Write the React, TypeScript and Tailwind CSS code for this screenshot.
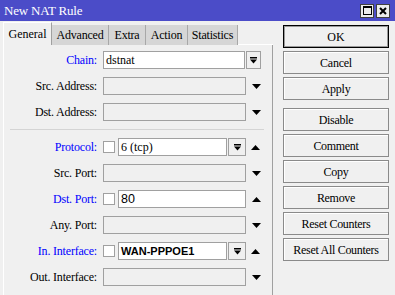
import React from "react";

function DownArrow() {
  return (
    <svg width="9" height="5" viewBox="0 0 9 5" className="block">
      <polygon points="0,0 9,0 4.5,5" fill="#000" />
    </svg>
  );
}

function UpArrow() {
  return (
    <svg width="9" height="5" viewBox="0 0 9 5" className="block">
      <polygon points="0,5 9,5 4.5,0" fill="#000" />
    </svg>
  );
}

function DropIcon() {
  return (
    <svg width="7" height="7" viewBox="0 0 7 7" className="block">
      <rect x="0" y="0" width="7" height="1.5" fill="#000" />
      <polygon points="0,2.5 7,2.5 3.5,6.5" fill="#000" />
    </svg>
  );
}

function Label({ text, blue }: { text: string; blue?: boolean }) {
  return (
    <div
      className={
        "w-[93px] text-right text-[12px] tracking-[-0.2px] leading-none font-['Liberation_Serif',serif] " +
        (blue ? "text-[#0000ff]" : "text-black")
      }
    >
      {text}
    </div>
  );
}

function Row({ children }: { children: React.ReactNode }) {
  return <div className="flex h-[26px] items-center">{children}</div>;
}

function Check() {
  return <div className="ml-[6px] h-[12px] w-[12px] border border-[#a0a0a0] bg-white" />;
}

function App() {
  const buttons1 = ["Cancel", "Apply"];
  const buttons2 = ["Disable", "Comment", "Copy", "Remove", "Reset Counters", "Reset All Counters"];
  return (
    <div className="flex h-[295px] w-[395px] flex-col overflow-hidden bg-[#f0f0f0]">
      {/* Title bar */}
      <div className="flex h-[21px] items-center bg-[#4b4cc8] pl-[4px] pr-[5px]">
        <div className="flex-1 text-[13px] tracking-[-0.2px] leading-none text-white font-['Liberation_Serif',serif]">
          New NAT Rule
        </div>
        <div className="flex gap-[2px]">
          <div className="flex h-[14px] w-[14px] items-center justify-center border border-[#404040] bg-[#ececec]">
            <div className="h-[9px] w-[9px] border border-t-2 border-black" />
          </div>
          <div className="flex h-[14px] w-[14px] items-center justify-center border border-[#404040] bg-[#ececec]">
            <svg width="8" height="8" viewBox="0 0 8 8" className="block">
              <path d="M1 1 L7 7 M7 1 L1 7" stroke="#000" strokeWidth="2" />
            </svg>
          </div>
        </div>
      </div>

      <div className="flex flex-1">
        {/* Left: tabs + panel */}
        <div className="ml-[3px] flex w-[270px] flex-col">
          <div className="mt-[1px] flex h-[23px] items-end">
            <div className="flex h-[23px] w-[49px] items-center justify-center border-l border-t border-white border-r border-r-[#a0a0a0] bg-[#f0f0f0] text-[12px] leading-none font-['Liberation_Serif',serif] text-black">
              General
            </div>
            {[
              ["Advanced", "w-[57px]"],
              ["Extra", "w-[37px]"],
              ["Action", "w-[42px]"],
              ["Statistics", "w-[50px]"],
            ].map(([t, w]) => (
              <div
                key={t}
                className={
                  w +
                  " flex h-[20px] items-center justify-center border-r border-[#a8a8a8] bg-[#d6d6d6] text-[12px] tracking-[-0.2px] leading-none font-['Liberation_Serif',serif] text-black"
                }
              >
                {t}
              </div>
            ))}
            <div className="h-[1px] flex-1 bg-white" />
          </div>
          <div className="flex flex-1 flex-col border-l border-l-white border-r border-r-[#a0a0a0] pt-[2px]">
            <Row>
              <Label text="Chain:" blue />
              <div className="ml-[6px] flex h-[18px] w-[142px] items-center border border-[#a0a0a0] bg-white pl-[2px] text-[12px] leading-none font-['Liberation_Serif',serif] text-black">
                dstnat
              </div>
              <div className="ml-[1px] flex h-[18px] w-[15px] items-center justify-center border border-[#a0a0a0] bg-[#f0f0f0]">
                <DropIcon />
              </div>
            </Row>
            <Row>
              <Label text="Src. Address:" />
              <div className="ml-[6px] h-[18px] w-[143px] border border-[#a0a0a0] bg-[#f0f0f0]" />
              <div className="ml-[6px]"><DownArrow /></div>
            </Row>
            <Row>
              <Label text="Dst. Address:" />
              <div className="ml-[6px] h-[18px] w-[143px] border border-[#a0a0a0] bg-[#f0f0f0]" />
              <div className="ml-[6px]"><DownArrow /></div>
            </Row>
            <div className="mb-[4px] ml-[6px] mt-[4px] h-[1px] w-[254px] bg-[#d4d4d4]" />
            <Row>
              <Label text="Protocol:" blue />
              <Check />
              <div className="ml-[3px] flex h-[18px] w-[109px] items-center border border-[#a0a0a0] bg-white pl-[2px] text-[12px] leading-none font-['Liberation_Serif',serif] text-black">
                6 (tcp)
              </div>
              <div className="ml-[1px] flex h-[18px] w-[18px] items-center justify-center border border-[#a0a0a0] bg-[#f0f0f0]">
                <DropIcon />
              </div>
              <div className="ml-[5px]"><UpArrow /></div>
            </Row>
            <Row>
              <Label text="Src. Port:" />
              <div className="ml-[6px] h-[18px] w-[143px] border border-[#a0a0a0] bg-[#f0f0f0]" />
              <div className="ml-[6px]"><DownArrow /></div>
            </Row>
            <Row>
              <Label text="Dst. Port:" blue />
              <Check />
              <div className="ml-[3px] flex h-[18px] w-[128px] items-center border border-[#a0a0a0] bg-white pl-[2px] text-[12.5px] leading-none font-['Liberation_Sans',sans-serif] text-black">
                80
              </div>
              <div className="ml-[6px]"><UpArrow /></div>
            </Row>
            <Row>
              <Label text="Any. Port:" />
              <div className="ml-[6px] h-[18px] w-[143px] border border-[#a0a0a0] bg-[#f0f0f0]" />
              <div className="ml-[6px]"><DownArrow /></div>
            </Row>
            <Row>
              <Label text="In. Interface:" blue />
              <Check />
              <div className="ml-[3px] flex h-[18px] w-[109px] items-center border border-[#a0a0a0] bg-white pl-[2px] text-[11px] font-bold leading-none font-['Liberation_Sans',sans-serif] text-black">
                WAN-PPPOE1
              </div>
              <div className="ml-[1px] flex h-[18px] w-[18px] items-center justify-center border border-[#a0a0a0] bg-[#f0f0f0]">
                <DropIcon />
              </div>
              <div className="ml-[5px]"><UpArrow /></div>
            </Row>
            <Row>
              <Label text="Out. Interface:" />
              <div className="ml-[6px] h-[18px] w-[143px] border border-[#a0a0a0] bg-[#f0f0f0]" />
              <div className="ml-[6px]"><DownArrow /></div>
            </Row>
          </div>
        </div>

        {/* Right: buttons */}
        <div className="ml-[10px] flex w-[106px] flex-col pt-[4px]">
          <div className="flex h-[23px] items-center justify-center border border-black bg-[#f0f0f0] shadow-[inset_0_0_0_1px_#9a9a9a] text-[12px] leading-none font-['Liberation_Serif',serif] text-black">
            OK
          </div>
          {buttons1.map((b) => (
            <div
              key={b}
              className="mt-[3px] flex h-[23px] items-center justify-center border border-[#8a8a8a] bg-[#f0f0f0] shadow-[inset_1px_1px_0_#ffffff] text-[12px] tracking-[-0.25px] leading-none font-['Liberation_Serif',serif] text-black"
            >
              {b}
            </div>
          ))}
          <div className="h-[5px]" />
          {buttons2.map((b) => (
            <div
              key={b}
              className="mt-[3px] flex h-[23px] items-center justify-center border border-[#8a8a8a] bg-[#f0f0f0] shadow-[inset_1px_1px_0_#ffffff] text-[12px] tracking-[-0.3px] leading-none font-['Liberation_Serif',serif] text-black"
            >
              {b}
            </div>
          ))}
        </div>
      </div>
    </div>
  );
}

export default App;
